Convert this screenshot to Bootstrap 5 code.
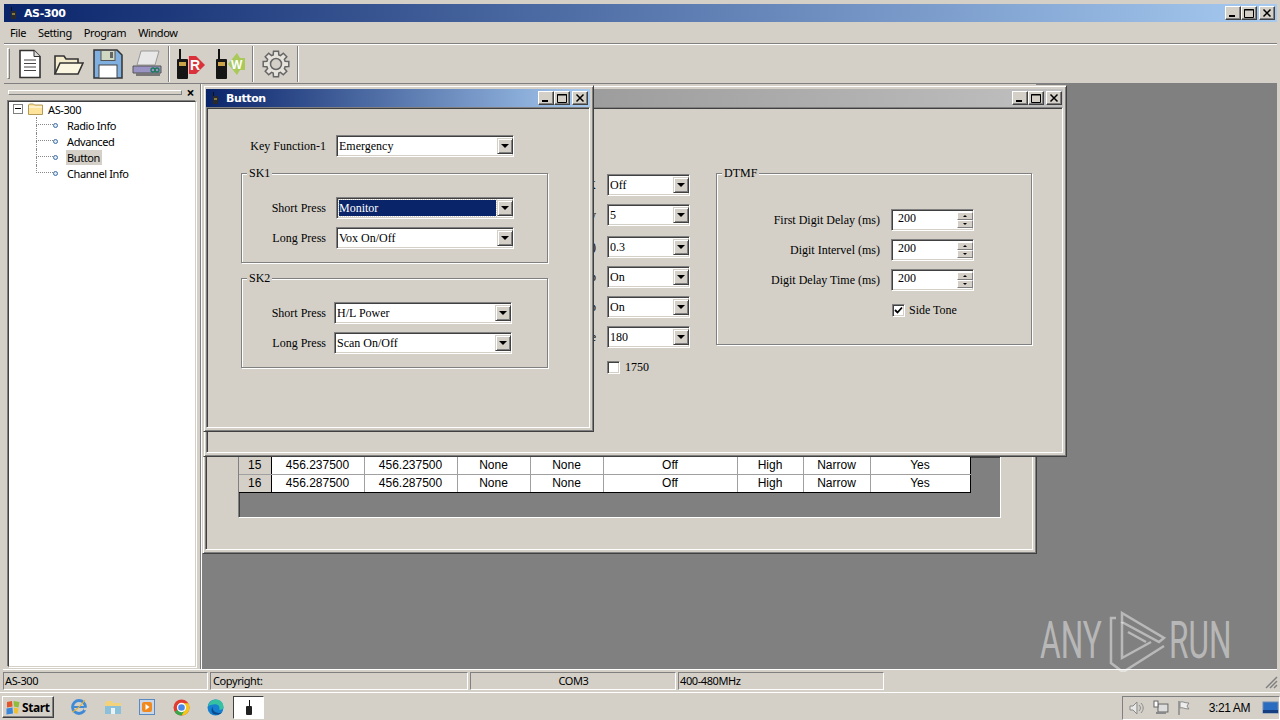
<!DOCTYPE html>
<html>
<head>
  <title>AS-300</title>
  <meta charset="UTF-8">
  <link href="https://cdn.jsdelivr.net/npm/bootstrap@5.3.0/dist/css/bootstrap.min.css" rel="stylesheet">
  <style>
    html, body { width: 1280px; height: 720px; overflow: hidden; }
    body { background: #d4d0c8; color: #000; font: 11px/13px "Noto Sans", sans-serif; letter-spacing: -.4px; position: relative; }

    .app-shell { height: 692px; padding: 4px 3px 2px 4px; }
    .title-main { height: 18px; background: linear-gradient(90deg, #0a246a, #a6caf0); color: #fff; font: 700 11px/13px "DejaVu Sans", sans-serif; letter-spacing: -.4px; padding-left: 5px; gap: 6px; flex: none; }
    .title-off { background: linear-gradient(90deg, #808080, #c0c0c0); }
    .cap-btns { margin-left: auto; margin-right: 2px; }
    .win-mid .cap-btns { margin-right: 1px; }
    .cap-btn { width: 16px; height: 14px; background: #d4d0c8; border: 1px solid; border-color: #fff #404040 #404040 #fff; box-shadow: inset -1px -1px #808080; position: relative; }
    .cap-btn svg { position: absolute; left: 2px; top: 1px; }
    .cap-btn.cap-x { margin-left: 2px; }

    .menu-row { height: 21px; gap: 12px; padding-left: 6px; flex: none; }
    .tool-row { height: 41px; border-top: 1px solid #808080; box-shadow: inset 0 1px #fff; border-bottom: 1px solid #808080; flex: none; padding-left: 3px; }
    .tool-grip { width: 3px; height: 31px; border: 1px solid; border-color: #fff #808080 #808080 #fff; }
    .tool-ico { width: 39px; height: 38px; }
    .tool-sep { width: 2px; height: 36px; border-left: 1px solid #808080; border-right: 1px solid #fff; margin: 0 2px; }

    .work-row { flex: 1 1 0; min-height: 0; }
    .dock { width: 197px; padding: 2px 4px 2px 4px; flex: none; border-right: 1px solid #808080; box-shadow: 1px 0 #fff; }
    .dock-head { height: 13px; flex: none; }
    .dock-grip { width: 174px; height: 5px; border: 1px solid; border-color: #fff #808080 #808080 #fff; box-shadow: inset 0 0 0 1px #d4d0c8; }
    .dock-x { margin-left: auto; margin-right: 2px; font-weight: 700; font-size: 14px; line-height: 9px; }
    .tree-box { flex: 1 1 0; background: #fff; border: 1px solid; border-color: #404040 #d4d0c8 #d4d0c8 #404040; box-shadow: -1px -1px #808080, 1px 1px #fff; margin-top: 2px; }
    .tree-row { height: 16px; position: relative; top: -1px; }
    .tree-root { padding-left: 4px; }
    .tree-exp { width: 10px; height: 10px; border: 1px solid #808080; position: relative; flex: none; margin-right: 5px; }
    .tree-exp::after { content: ""; position: absolute; left: 1px; right: 1px; top: 3px; height: 1px; background: #000; }
    .tree-folder { margin-right: 5px; }
    .tree-kid { padding-left: 58px; }
    .tree-kid::before { content: ""; position: absolute; left: 27px; top: 0; width: 17px; height: 8px; border-left: 1px dotted #888; border-bottom: 1px dotted #888; }
    .tree-kid:not(:last-child)::after { content: ""; position: absolute; left: 27px; top: 8px; height: 8px; border-left: 1px dotted #888; }
    .tree-dot { position: absolute; left: 44px; top: 6px; width: 5px; height: 5px; border-radius: 50%; background: #dfeaf5; border: 1px solid #3d6fa5; }
    .tree-pick { background: #d4d0c8; padding: 0 2px 0 1px; margin-left: -1px; line-height: 15px; }

    .mdi-area { flex: 1 1 0; background: #808080; position: relative; margin-left: 1px; overflow: hidden; }
    .win { position: absolute; background: #d4d0c8; border: 1px solid; border-color: #d4d0c8 #404040 #404040 #d4d0c8; box-shadow: inset 1px 1px #fff, inset -1px -1px #808080; padding: 3px 3px 3px 2px; }
    .win-back { left: 0; top: 0; width: 835px; height: 470px; }
    .win-mid { left: 1px; top: 1px; width: 864px; height: 372px; }
    .win-top { left: 1px; top: 1px; width: 391px; height: 347px; }
    .win-body { flex: 1 1 0; min-height: 0; border: 1px solid; border-color: #808080 #fff #fff #808080; box-shadow: inset 1px 1px #404040; position: relative; }

    .ser { font-family: "Liberation Serif", serif; font-size: 12px; letter-spacing: 0; }
    .combo { height: 22px; background: #fff; border: 1px solid; border-color: #808080 #fff #fff #808080; box-shadow: inset 1px 1px #404040, inset -1px -1px #d4d0c8; padding: 2px 0 2px 2px; }
    .combo-val { flex: 1 1 0; line-height: 16px; }
    .combo-val.sel { background: #0a246a; color: #fff; outline: 1px dotted #d4d0c8; margin-right: 1px; }
    .combo-btn { width: 16px; flex: none; background: #d4d0c8; border: 1px solid; border-color: #d4d0c8 #404040 #404040 #d4d0c8; box-shadow: inset 1px 1px #fff, inset -1px -1px #808080; }
    .combo-btn::after { content: ""; border: 4px solid transparent; border-top-color: #000; border-bottom-width: 0; }
    .w-key { width: 178px; }
    .w-mid { width: 83px; }

    .field-row { height: 22px; }
    .lab-r { text-align: right; flex: none; white-space: nowrap; }
    .grp { position: relative; border: 1px solid #808080; box-shadow: 1px 1px #fff, inset 1px 1px #fff; }
    .grp-lab { position: absolute; left: 5px; top: -8px; background: #d4d0c8; padding: 0 2px; line-height: 14px; }
    .top-form { padding: 27px 0 0 37px; }
    .sk-group { width: 307px; height: 90px; padding-top: 23px; margin-left: -3px; }
    .sk-one { margin-top: 16px; }
    .sk-two { margin-top: 15px; }
    .sk-lab { width: 84px; margin-right: 10px; }
    .sk-two-lab { margin-right: 8px; }
    .key-lab { width: 79px; margin-left: 3px; margin-right: 10px; }
    .mid-form { padding-top: 66px; }
    .mid-left { width: 501px; flex: none; }
    .lab-peek { width: 389px; margin-right: 11px; }
    .row-gap-big { margin-bottom: 10px; }
    .dtmf-group { width: 316px; height: 172px; margin-left: 8px; margin-top: -1px; padding-top: 35px; }
    .dt-lab { width: 163px; margin-right: 11px; }
    .spin { width: 83px; height: 22px; background: #fff; border: 1px solid; border-color: #808080 #fff #fff #808080; box-shadow: inset 1px 1px #404040, inset -1px -1px #d4d0c8; padding: 2px 0 2px 2px; }
    .spin-btns { width: 16px; flex: none; }
    .spin-up, .spin-dn { flex: 1 1 0; background: #d4d0c8; border: 1px solid; border-color: #fff #808080 #808080 #fff; }
    .spin-up::after { content: ""; border: 2px solid transparent; border-bottom-color: #000; border-top-width: 0; }
    .spin-dn::after { content: ""; border: 2px solid transparent; border-top-color: #000; border-bottom-width: 0; }
    .chk { width: 13px; height: 13px; background: #fff; border: 1px solid; border-color: #808080 #fff #fff #808080; box-shadow: inset 1px 1px #404040, inset -1px -1px #d4d0c8; flex: none; }
    .tone-row { margin: 12px 0 0 400px; height: 14px; gap: 5px; }
    .side-row { margin: 12px 0 0 175px; height: 14px; gap: 4px; }

    .grid-pane { margin: 0 31px 31px 32px; height: 62px; background: #808080; border: 1px solid; border-color: #808080 #fff #fff #808080; box-shadow: inset 1px 1px #404040; padding-bottom: 24px; }
    .grid-tab { table-layout: fixed; width: 731px; border-collapse: collapse; background: #fff; font: 12px/17px "Liberation Sans", sans-serif; letter-spacing: 0; text-align: center; }
    .grid-tab td { height: 18px; padding: 0; border-right: 1px solid #a0a0a0; border-bottom: 1px solid #000; }
    .grid-tab tr:first-child td { border-bottom-color: #a0a0a0; }
    .grid-tab td:first-child { background: #d4d0c8; border-right-color: #000; border-bottom-color: #000; }
    .grid-tab td:last-child { border-right-color: #000; }
    .cw-hdr { width: 32px; }
    .cw-freq { width: 93px; }
    .cw-tone { width: 73px; }
    .cw-off { width: 134px; }
    .cw-pow { width: 66px; }
    .cw-band { width: 67px; }
    .cw-yes { width: 100px; }

    .status-row { height: 21px; gap: 2px; border-top: 1px solid #fff; padding-top: 2px; margin-left: -1px; flex: none; }
    .stat-cell { width: 206px; height: 18px; border: 1px solid; border-color: #808080 #fff #fff #808080; padding-left: 1px; line-height: 15px; flex: none; overflow: hidden; }
    .stat-first { width: 205px; }
    .stat-wide { width: 258px; padding-left: 2px; }
    .task-bar { position: absolute; left: 0; right: 0; top: 692px; height: 28px; border-top: 1px solid #fff; box-shadow: inset 0 1px #d4d0c8; padding: 3px 0 0 2px; }
    .start-btn { width: 52px; height: 22px; border: 1px solid; border-color: #fff #404040 #404040 #fff; box-shadow: inset -1px -1px #808080; font: 700 12px "Noto Sans", sans-serif; gap: 1px; padding-left: 2px; }
    .quick-wrap { margin-left: 8px; }
    .quick-ico { width: 34px; height: 22px; }
    .task-on { width: 31px; height: 23px; margin-left: 1px; border: 1px solid; border-color: #404040 #fff #fff #404040; background: #fff; }
    .tray { margin-left: auto; width: 158px; height: 24px; flex: none; border: 1px solid; border-color: #808080 #fff #fff #808080; font: 12px "Liberation Sans", sans-serif; white-space: nowrap; }
    .tray-ico { margin-left: 8px; }
    .tray-ico:first-child { margin-left: 6px; }
    .tray-time { margin-left: 16px; }
    .tray-desk { margin-left: 12px; flex: none; }
    .grip-corner { position: absolute; left: 1264px; top: 675px; }

    .mark-wm { position: absolute; left: 1040px; top: 610px; width: 196px; height: 62px; pointer-events: none; }
    .mark-txt { position: absolute; top: 4px; color: rgba(255,255,255,.45); font: 400 51px/54px Roboto, sans-serif; letter-spacing: 0; transform: scaleX(.62); transform-origin: 0 0; }
    .mark-any { left: 0; }
    .mark-run { left: 129px; }
    .mark-play { position: absolute; left: 68px; top: 0; }
  </style>
</head>
<body>

<div class="app-shell d-flex flex-column">
  <div class="title-main d-flex align-items-center">
    <svg width="9" height="14" viewBox="0 0 9 14"><rect x="2" y="1" width="1" height="5" fill="#111"/><rect x="2" y="5" width="5" height="8" fill="#2a2a2a"/><rect x="3" y="7" width="3" height="2" fill="#8a7a3a"/></svg>
    <span>AS-300</span>
    <div class="cap-btns d-flex">
      <div class="cap-btn"><svg width="10" height="10"><rect x="1" y="7" width="6" height="2"/></svg></div>
      <div class="cap-btn"><svg width="10" height="10"><path d="M.5 1.500h9v8h-9z M0 2h10" fill="none" stroke="#000"/></svg></div>
      <div class="cap-btn cap-x"><svg width="10" height="10"><path d="M1.500 1.500l7 7m0-7l-7 7" stroke="#000" stroke-width="1.500"/></svg></div>
    </div>
  </div>

  <div class="menu-row d-flex align-items-center">
    <span>File</span><span>Setting</span><span>Program</span><span>Window</span>
  </div>

  <div class="tool-row d-flex align-items-center">
    <div class="tool-grip"></div>
    <div class="tool-ico d-flex align-items-center justify-content-center">
      <svg width="24" height="30" viewBox="0 0 24 30"><path d="M2 1.500h14l6 6v21H2z" fill="#fff" stroke="#333" stroke-width="1.600"/><path d="M16 1.500v6h6" fill="#ddd" stroke="#333"/><path d="M6 11h12M6 14.500h12M6 18h12M6 21.500h12" stroke="#444"/></svg>
    </div>
    <div class="tool-ico d-flex align-items-center justify-content-center">
      <svg width="30" height="24" viewBox="0 0 30 24"><path d="M1 22V4h9l2 3h12v4" fill="#f4eccc" stroke="#333" stroke-width="1.600"/><path d="M1 22l5-11h23l-5 11z" fill="#fbf6e0" stroke="#333" stroke-width="1.600"/></svg>
    </div>
    <div class="tool-ico d-flex align-items-center justify-content-center">
      <svg width="30" height="30" viewBox="0 0 30 30"><path d="M1 1h23l5 5v23H1z" fill="#7fb0e0" stroke="#333" stroke-width="1.500"/><rect x="8" y="1.500" width="14" height="10" fill="#cfd8c0" stroke="#555"/><rect x="17" y="3" width="3" height="6" fill="#666"/><rect x="6" y="16" width="18" height="13" fill="#fff" stroke="#444"/></svg>
    </div>
    <div class="tool-ico d-flex align-items-center justify-content-center">
      <svg width="32" height="30" viewBox="0 0 32 30"><path d="M10 2h18l-4 14H6z" fill="#e8e8e8" stroke="#999"/><path d="M2 17h28v7H2z" fill="#9a94c4" stroke="#555"/><rect x="5" y="24" width="24" height="3" fill="#777"/><circle cx="22" cy="21" r="2" fill="none" stroke="#1c7a5a" stroke-width="1.300"/><circle cx="26" cy="21" r="2" fill="none" stroke="#1c7a5a" stroke-width="1.300"/></svg>
    </div>
    <div class="tool-sep"></div>
    <div class="tool-ico d-flex align-items-center justify-content-center">
      <svg width="32" height="32" viewBox="0 0 32 32"><rect x="3" y="1" width="2" height="12" fill="#111"/><rect x="1" y="11" width="11" height="20" rx="1" fill="#151515"/><rect x="3" y="14" width="7" height="4" fill="#c9a24a"/><path d="M13 8h7l9 9-9 9h-7z" fill="#d9323c"/><path d="M13 8l-1 0v18h1z" fill="#f2b8b8"/><text x="14" y="22" font-family="Liberation Sans" font-weight="700" font-size="14" fill="#fff">R</text></svg>
    </div>
    <div class="tool-ico d-flex align-items-center justify-content-center">
      <svg width="32" height="32" viewBox="0 0 32 32"><rect x="3" y="1" width="2" height="12" fill="#111"/><rect x="1" y="11" width="11" height="20" rx="1" fill="#151515"/><rect x="3" y="14" width="7" height="4" fill="#c9a24a"/><path d="M22 5l3 5h5v12h-5l-3 5-9-11z" fill="#a9c95a"/><text x="16" y="21" font-family="Liberation Sans" font-weight="700" font-size="12" fill="#fff">W</text></svg>
    </div>
    <div class="tool-sep"></div>
    <div class="tool-ico d-flex align-items-center justify-content-center">
      <svg width="28" height="28" viewBox="0 0 28 28"><path d="M11.500 1.200L16.500 1.200 16.800 4.900 18.500 5.600 21.300 3.200 24.800 6.700 22.400 9.500 23.100 11.200 26.800 11.500 26.800 16.500 23.100 16.800 22.400 18.500 24.800 21.300 21.300 24.800 18.500 22.400 16.800 23.100 16.500 26.800 11.500 26.800 11.200 23.100 9.500 22.400 6.700 24.800 3.200 21.300 5.600 18.500 4.900 16.800 1.200 16.500 1.200 11.500 4.900 11.200 5.600 9.500 3.200 6.700 6.700 3.200 9.500 5.600 11.200 4.900z" fill="#e6e3dc" stroke="#666" stroke-width="1.500"/><circle cx="14" cy="14" r="5.500" fill="#d4d0c8" stroke="#666" stroke-width="1.500"/></svg>
    </div>
    <div class="tool-sep"></div>
  </div>

  <div class="work-row d-flex">
    <div class="dock d-flex flex-column">
      <div class="dock-head d-flex align-items-center">
        <div class="dock-grip"></div>
        <div class="dock-x">×</div>
      </div>
      <div class="tree-box">
        <div class="tree-row tree-root d-flex align-items-center">
          <div class="tree-exp"></div>
          <svg class="tree-folder" width="15" height="12" viewBox="0 0 15 12"><path d="M.5 11.500V2l1-1h4l1 1h8v9.500z" fill="#fde49a" stroke="#b39a58"/><path d="M1 4h13" stroke="#fff"/></svg>
          <span>AS-300</span>
        </div>
        <div class="tree-row tree-kid d-flex align-items-center"><i class="tree-dot"></i><span>Radio Info</span></div>
        <div class="tree-row tree-kid d-flex align-items-center"><i class="tree-dot"></i><span>Advanced</span></div>
        <div class="tree-row tree-kid d-flex align-items-center"><i class="tree-dot"></i><span class="tree-pick">Button</span></div>
        <div class="tree-row tree-kid d-flex align-items-center"><i class="tree-dot"></i><span>Channel Info</span></div>
      </div>
    </div>

    <div class="mdi-area">
      <!-- channel info, mostly hidden -->
      <div class="win win-back d-flex flex-column">
        <div class="title-main title-off"></div>
        <div class="win-body d-flex flex-column justify-content-end">
          <div class="grid-pane d-flex flex-column justify-content-end">
            <table class="grid-tab">
              <colgroup><col class="cw-hdr"><col class="cw-freq"><col class="cw-freq"><col class="cw-tone"><col class="cw-tone"><col class="cw-off"><col class="cw-pow"><col class="cw-band"><col class="cw-yes"></colgroup>
              <tr><td>15</td><td>456.237500</td><td>456.237500</td><td>None</td><td>None</td><td>Off</td><td>High</td><td>Narrow</td><td>Yes</td></tr>
              <tr><td>16</td><td>456.287500</td><td>456.287500</td><td>None</td><td>None</td><td>Off</td><td>High</td><td>Narrow</td><td>Yes</td></tr>
            </table>
          </div>
        </div>
      </div>

      <!-- advanced -->
      <div class="win win-mid d-flex flex-column">
        <div class="title-main title-off d-flex align-items-center">
          <div class="cap-btns d-flex">
            <div class="cap-btn"><svg width="10" height="10"><rect x="1" y="7" width="6" height="2"/></svg></div>
            <div class="cap-btn"><svg width="10" height="10"><path d="M.5 1.500h9v8h-9z M0 2h10" fill="none" stroke="#000"/></svg></div>
            <div class="cap-btn cap-x"><svg width="10" height="10"><path d="M1.500 1.500l7 7m0-7l-7 7" stroke="#000" stroke-width="1.500"/></svg></div>
          </div>
        </div>
        <div class="win-body ser mid-form d-flex">
          <div class="mid-left d-flex flex-column">
            <div class="field-row d-flex align-items-center mb-2"><div class="lab-r lab-peek">X</div><div class="combo w-mid d-flex"><div class="combo-val">Off</div><div class="combo-btn d-flex align-items-center justify-content-center"></div></div></div>
            <div class="field-row d-flex align-items-center row-gap-big"><div class="lab-r lab-peek">y</div><div class="combo w-mid d-flex"><div class="combo-val">5</div><div class="combo-btn d-flex align-items-center justify-content-center"></div></div></div>
            <div class="field-row d-flex align-items-center mb-2"><div class="lab-r lab-peek">)</div><div class="combo w-mid d-flex"><div class="combo-val">0.3</div><div class="combo-btn d-flex align-items-center justify-content-center"></div></div></div>
            <div class="field-row d-flex align-items-center mb-2"><div class="lab-r lab-peek">p</div><div class="combo w-mid d-flex"><div class="combo-val">On</div><div class="combo-btn d-flex align-items-center justify-content-center"></div></div></div>
            <div class="field-row d-flex align-items-center mb-2"><div class="lab-r lab-peek">p</div><div class="combo w-mid d-flex"><div class="combo-val">On</div><div class="combo-btn d-flex align-items-center justify-content-center"></div></div></div>
            <div class="field-row d-flex align-items-center"><div class="lab-r lab-peek">e</div><div class="combo w-mid d-flex"><div class="combo-val">180</div><div class="combo-btn d-flex align-items-center justify-content-center"></div></div></div>
            <div class="d-flex align-items-center tone-row"><div class="chk"></div><span>1750</span></div>
          </div>
          <div class="grp dtmf-group">
            <div class="grp-lab">DTMF</div>
            <div class="field-row d-flex align-items-center mb-2"><div class="lab-r dt-lab">First Digit Delay (ms)</div><div class="spin d-flex"><div class="flex-grow-1 ps-1">200</div><div class="spin-btns d-flex flex-column"><div class="spin-up d-flex align-items-center justify-content-center"></div><div class="spin-dn d-flex align-items-center justify-content-center"></div></div></div></div>
            <div class="field-row d-flex align-items-center mb-2"><div class="lab-r dt-lab">Digit Intervel (ms)</div><div class="spin d-flex"><div class="flex-grow-1 ps-1">200</div><div class="spin-btns d-flex flex-column"><div class="spin-up d-flex align-items-center justify-content-center"></div><div class="spin-dn d-flex align-items-center justify-content-center"></div></div></div></div>
            <div class="field-row d-flex align-items-center"><div class="lab-r dt-lab">Digit Delay Time (ms)</div><div class="spin d-flex"><div class="flex-grow-1 ps-1">200</div><div class="spin-btns d-flex flex-column"><div class="spin-up d-flex align-items-center justify-content-center"></div><div class="spin-dn d-flex align-items-center justify-content-center"></div></div></div></div>
            <div class="d-flex align-items-center side-row"><div class="chk d-flex align-items-center justify-content-center"><svg width="9" height="9" viewBox="0 0 9 9"><path d="M1 4l2.500 2.500L8 1.500" fill="none" stroke="#000" stroke-width="1.800"/></svg></div><span>Side Tone</span></div>
          </div>
        </div>
      </div>

      <!-- button -->
      <div class="win win-top d-flex flex-column">
        <div class="title-main d-flex align-items-center">
          <svg width="9" height="14" viewBox="0 0 9 14"><rect x="2" y="1" width="1" height="5" fill="#111"/><rect x="2" y="5" width="5" height="8" fill="#2a2a2a"/><rect x="3" y="7" width="3" height="2" fill="#8a7a3a"/></svg>
          <span>Button</span>
          <div class="cap-btns d-flex">
            <div class="cap-btn"><svg width="10" height="10"><rect x="1" y="7" width="6" height="2"/></svg></div>
            <div class="cap-btn"><svg width="10" height="10"><path d="M.5 1.500h9v8h-9z M0 2h10" fill="none" stroke="#000"/></svg></div>
            <div class="cap-btn cap-x"><svg width="10" height="10"><path d="M1.500 1.500l7 7m0-7l-7 7" stroke="#000" stroke-width="1.500"/></svg></div>
          </div>
        </div>
        <div class="win-body ser top-form">
          <div class="field-row d-flex align-items-center"><div class="lab-r key-lab">Key Function-1</div><div class="combo w-key d-flex"><div class="combo-val">Emergency</div><div class="combo-btn d-flex align-items-center justify-content-center"></div></div></div>
          <div class="grp sk-group sk-one">
            <div class="grp-lab">SK1</div>
            <div class="field-row d-flex align-items-center mb-2"><div class="lab-r sk-lab">Short Press</div><div class="combo w-key d-flex"><div class="combo-val sel">Monitor</div><div class="combo-btn d-flex align-items-center justify-content-center"></div></div></div>
            <div class="field-row d-flex align-items-center"><div class="lab-r sk-lab">Long Press</div><div class="combo w-key d-flex"><div class="combo-val">Vox On/Off</div><div class="combo-btn d-flex align-items-center justify-content-center"></div></div></div>
          </div>
          <div class="grp sk-group sk-two">
            <div class="grp-lab">SK2</div>
            <div class="field-row d-flex align-items-center mb-2"><div class="lab-r sk-lab sk-two-lab">Short Press</div><div class="combo w-key d-flex"><div class="combo-val">H/L Power</div><div class="combo-btn d-flex align-items-center justify-content-center"></div></div></div>
            <div class="field-row d-flex align-items-center"><div class="lab-r sk-lab sk-two-lab">Long Press</div><div class="combo w-key d-flex"><div class="combo-val">Scan On/Off</div><div class="combo-btn d-flex align-items-center justify-content-center"></div></div></div>
          </div>
        </div>
      </div>
    </div>
  </div>

  <div class="status-row d-flex">
    <div class="stat-cell stat-first">AS-300</div>
    <div class="stat-cell stat-wide">Copyright:</div>
    <div class="stat-cell text-center">COM3</div>
    <div class="stat-cell">400-480MHz</div>
  </div>
</div>

<svg class="grip-corner" width="14" height="14" viewBox="0 0 14 14"><path d="M13 2L2 13M13 6l-7 7M13 10l-3 3" stroke="#808080" stroke-width="1.500"/></svg>

<div class="task-bar d-flex">
  <div class="start-btn d-flex align-items-center">
    <svg width="16" height="15" viewBox="0 0 16 15"><path d="M2 2l5-1 .5 5.500-5.500 1z" fill="#e2562c"/><path d="M8.500 1l6 1-1 5.500-4.500-1z" fill="#8fbc3c"/><path d="M1.500 8.500l6-1 .5 6-6.500 1z" fill="#3a86d8"/><path d="M9 7.500l4.500 1-1 5.500-3.500-1z" fill="#f0c030"/></svg>
    <span>Start</span>
  </div>
  <div class="quick-wrap d-flex">
    <div class="quick-ico d-flex align-items-center justify-content-center">
      <svg width="18" height="18" viewBox="0 0 18 18"><circle cx="9" cy="9" r="6.500" fill="none" stroke="#3f8ad6" stroke-width="2.800"/><path d="M4 9h10" stroke="#3f8ad6" stroke-width="2"/><path d="M14 11h4" stroke="#d4d0c8" stroke-width="2.500"/><path d="M2 14c3-1 9-6 13-12" fill="none" stroke="#e6b030" stroke-width="1.200"/></svg>
    </div>
    <div class="quick-ico d-flex align-items-center justify-content-center">
      <svg width="18" height="16" viewBox="0 0 18 16"><path d="M1 15V4l2-2h5l1 2h8v11z" fill="#f2d27a"/><rect x="1" y="7" width="16" height="8" fill="#8cc0d8"/><rect x="7" y="9" width="4" height="6" fill="#eaf2f5"/></svg>
    </div>
    <div class="quick-ico d-flex align-items-center justify-content-center">
      <svg width="16" height="16" viewBox="0 0 16 16"><rect x=".5" y=".5" width="15" height="15" fill="#c8d8e8" stroke="#5a8ac0"/><rect x="3" y="3" width="10" height="10" rx="2" fill="#f08a20"/><path d="M6.500 5l4 3-4 3z" fill="#fff"/></svg>
    </div>
    <div class="quick-ico d-flex align-items-center justify-content-center">
      <svg width="17" height="17" viewBox="0 0 32 32"><circle cx="16" cy="16" r="15" fill="#e03c30"/><path d="M16 31a15 15 0 0 0 15-15c0-3-1-6-2-8H16z" fill="#f5c518"/><path d="M16 16L3 24a15 15 0 0 0 13 7l6-10z" fill="#3aa84a"/><circle cx="16" cy="16" r="7.500" fill="#4a88e8" stroke="#fff" stroke-width="2.500"/></svg>
    </div>
    <div class="quick-ico d-flex align-items-center justify-content-center">
      <svg width="17" height="17" viewBox="0 0 32 32"><circle cx="16" cy="16" r="15" fill="#1680d0"/><path d="M2 14C4 6 10 1 17 1c8 0 14 6 14 14 0 4-4 6-8 5 2-6-2-10-8-10-6 0-11 2-13 4z" fill="#35c2a0"/><path d="M13 28c-5-2-6-9-2-13-1 6 3 10 9 11 3 1 7 0 9-2-3 5-10 7-16 4z" fill="#0c4a8c"/></svg>
    </div>
    <div class="task-on d-flex align-items-center justify-content-center">
      <svg width="10" height="17" viewBox="0 0 10 17"><rect x="5" y="1" width="1" height="7" fill="#111"/><rect x="2" y="7" width="6" height="9" rx="1" fill="#222"/></svg>
    </div>
  </div>
  <div class="tray d-flex align-items-center">
    <svg class="tray-ico" width="16" height="16" viewBox="0 0 16 16"><path d="M1 6h3l4-4v12l-4-4H1z" fill="#e8e8e8" stroke="#888"/><path d="M10 5c2 2 2 4 0 6M12 3c3 3 3 7 0 10" fill="none" stroke="#888"/></svg>
    <svg class="tray-ico" width="16" height="16" viewBox="0 0 16 16"><rect x="5" y="4" width="10" height="8" fill="#ddd" stroke="#666"/><path d="M3 13h10" stroke="#888" stroke-width="2"/><rect x="1" y="1" width="4" height="6" fill="#fff" stroke="#666"/></svg>
    <svg class="tray-ico" width="16" height="16" viewBox="0 0 16 16"><path d="M2 1v14" stroke="#888" stroke-width="1.500"/><path d="M3 2c3-1 4 1 9 1l-2 3 2 3c-5 0-6-2-9-1z" fill="#eee" stroke="#888"/></svg>
    <span class="tray-time">3:21 AM</span>
    <svg class="tray-desk" width="17" height="16" viewBox="0 0 17 16"><rect x="1" y="2" width="15" height="11" fill="#2a6cc0" stroke="#6a8ab0"/><path d="M1 10h15v3H1z" fill="#153f80"/></svg>
  </div>
</div>

<div class="mark-wm">
  <span class="mark-txt mark-any">ANY</span>
  <svg class="mark-play" width="60" height="62" viewBox="0 0 60 62" fill="none" stroke="rgba(255,255,255,.45)" stroke-width="2.500"><path d="M8 8H3v45l12 9 41-26"/><path d="M14 3l42 25-5 4L14 12z"/><path d="M14 12v36l29-16"/><path d="M20 22l18 10"/></svg>
  <span class="mark-txt mark-run">RUN</span>
</div>

</body>
</html>
